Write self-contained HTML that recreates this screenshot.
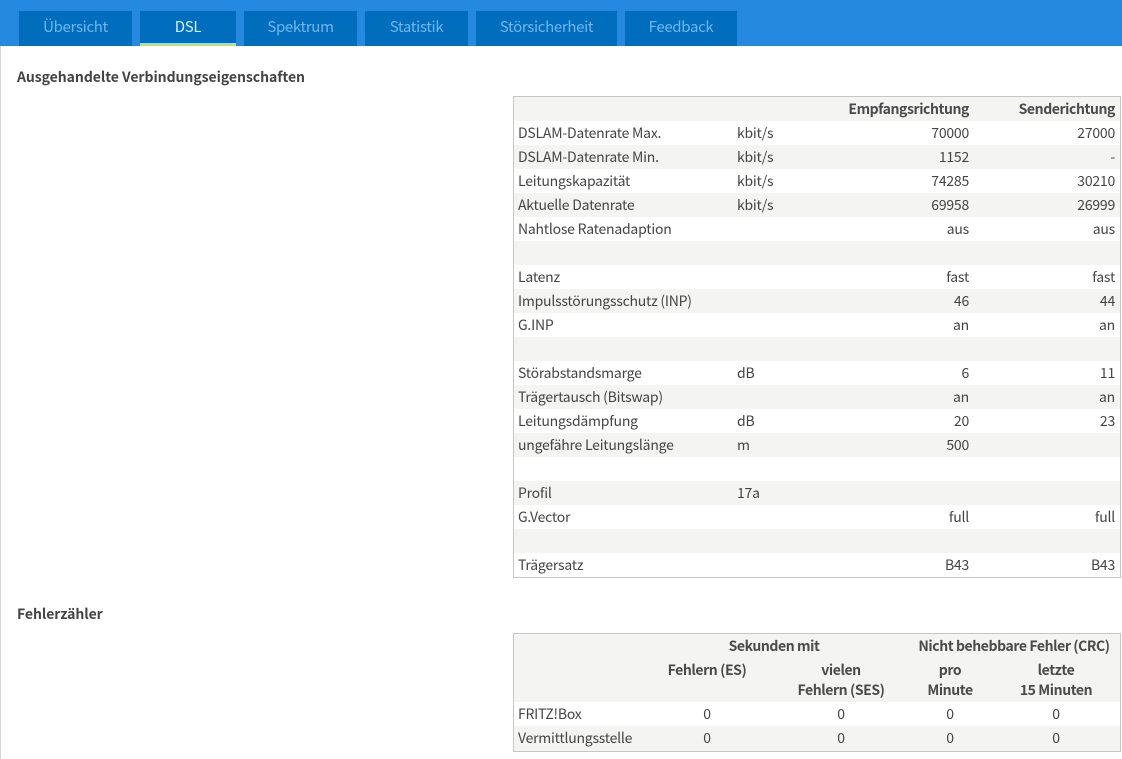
<!DOCTYPE html>
<html lang="de"><head><meta charset="utf-8"><title>DSL</title>
<style>
html,body{margin:0;padding:0;background:#fff}
body{width:1122px;height:759px;position:relative;overflow:hidden;font-family:"Noto Sans CJK SC","Liberation Sans",sans-serif;font-size:14px;letter-spacing:-.23px;color:#444}
.abs,.tab,.t,.r{position:absolute}
.hdr{position:absolute;left:0;top:0;width:1122px;height:46px;background:#2589e0}
.edge{position:absolute;left:0;top:46px;width:1px;height:713px;background:#d4d4d4}
.tab{top:11px;height:35px;background:#016dbd;color:#6fb6ee;font-size:15px;letter-spacing:-.33px;line-height:31px;text-align:center}
.tab.on{color:#dcf2fa}
.tab.on:after{content:"";position:absolute;left:0;right:0;top:32px;height:3px;background:#c5e060}
h2{position:absolute;left:17px;margin:0;font-size:14px;letter-spacing:-.05px;line-height:20px;font-weight:700;color:#444}
.box{position:absolute;left:513px;width:606px;border:1px solid #c6c7c0;background:#fff}
.r{left:0;width:606px;height:24px}
.s{background:#f4f4f2}
.t{white-space:nowrap;line-height:24px;height:24px}
.u{left:223px}
.l{left:4px}
.a{right:151px;text-align:right}
.b{right:5px;text-align:right}
.c{width:0;display:flex;justify-content:center}
.m{font-weight:700;letter-spacing:-.42px;color:#4a4a4a}
</style></head><body>
<div class="hdr"></div><div class="edge"></div>
<div class="tab" style="left:19px;width:113px">Übersicht</div>
<div class="tab on" style="left:140px;width:96px">DSL</div>
<div class="tab" style="left:244px;width:113px">Spektrum</div>
<div class="tab" style="left:365px;width:103px">Statistik</div>
<div class="tab" style="left:476px;width:141px">Störsicherheit</div>
<div class="tab" style="left:625px;width:112px">Feedback</div>

<h2 style="top:67px">Ausgehandelte Verbindungseigenschaften</h2>
<div class="box" style="top:96px;height:480px">
<div class="r s" style="top:0"><span class="t a m">Empfangsrichtung</span><span class="t b m">Senderichtung</span></div>
<div class="r" style="top:24px"><span class="t l">DSLAM-Datenrate Max.</span><span class="t u">kbit/s</span><span class="t a">70000</span><span class="t b">27000</span></div>
<div class="r s" style="top:48px"><span class="t l">DSLAM-Datenrate Min.</span><span class="t u">kbit/s</span><span class="t a">1152</span><span class="t b">-</span></div>
<div class="r" style="top:72px"><span class="t l">Leitungskapazität</span><span class="t u">kbit/s</span><span class="t a">74285</span><span class="t b">30210</span></div>
<div class="r s" style="top:96px"><span class="t l">Aktuelle Datenrate</span><span class="t u">kbit/s</span><span class="t a">69958</span><span class="t b">26999</span></div>
<div class="r" style="top:120px"><span class="t l">Nahtlose Ratenadaption</span><span class="t a">aus</span><span class="t b">aus</span></div>
<div class="r s" style="top:144px"></div>
<div class="r" style="top:168px"><span class="t l">Latenz</span><span class="t a">fast</span><span class="t b">fast</span></div>
<div class="r s" style="top:192px"><span class="t l">Impulsstörungsschutz (INP)</span><span class="t a">46</span><span class="t b">44</span></div>
<div class="r" style="top:216px"><span class="t l">G.INP</span><span class="t a">an</span><span class="t b">an</span></div>
<div class="r s" style="top:240px"></div>
<div class="r" style="top:264px"><span class="t l">Störabstandsmarge</span><span class="t u">dB</span><span class="t a">6</span><span class="t b">11</span></div>
<div class="r s" style="top:288px"><span class="t l">Trägertausch (Bitswap)</span><span class="t a">an</span><span class="t b">an</span></div>
<div class="r" style="top:312px"><span class="t l">Leitungsdämpfung</span><span class="t u">dB</span><span class="t a">20</span><span class="t b">23</span></div>
<div class="r s" style="top:336px"><span class="t l">ungefähre Leitungslänge</span><span class="t u">m</span><span class="t a">500</span></div>
<div class="r" style="top:360px"></div>
<div class="r s" style="top:384px"><span class="t l">Profil</span><span class="t u">17a</span></div>
<div class="r" style="top:408px"><span class="t l">G.Vector</span><span class="t a">full</span><span class="t b">full</span></div>
<div class="r s" style="top:432px"></div>
<div class="r" style="top:456px"><span class="t l">Trägersatz</span><span class="t a">B43</span><span class="t b">B43</span></div>
</div>

<h2 style="top:604px">Fehlerzähler</h2>
<div class="box" style="top:633px;height:117px">
<div class="r s" style="top:0;height:68px">
<span class="t c m" style="left:260px;top:0">Sekunden mit</span>
<span class="t c m" style="left:500px;top:0">Nicht behebbare Fehler (CRC)</span>
<span class="t c m" style="left:193px;top:24px">Fehlern (ES)</span>
<span class="t c m" style="left:327px;top:24px">vielen</span>
<span class="t c m" style="left:327px;top:44px">Fehlern (SES)</span>
<span class="t c m" style="left:436px;top:24px">pro</span>
<span class="t c m" style="left:436px;top:44px">Minute</span>
<span class="t c m" style="left:542px;top:24px">letzte</span>
<span class="t c m" style="left:542px;top:44px">15 Minuten</span>
</div>
<div class="r" style="top:68px"><span class="t l">FRITZ!Box</span><span class="t c" style="left:193px">0</span><span class="t c" style="left:327px">0</span><span class="t c" style="left:436px">0</span><span class="t c" style="left:542px">0</span></div>
<div class="r s" style="top:92px;height:25px"><span class="t l">Vermittlungsstelle</span><span class="t c" style="left:193px">0</span><span class="t c" style="left:327px">0</span><span class="t c" style="left:436px">0</span><span class="t c" style="left:542px">0</span></div>
</div>
</body></html>
